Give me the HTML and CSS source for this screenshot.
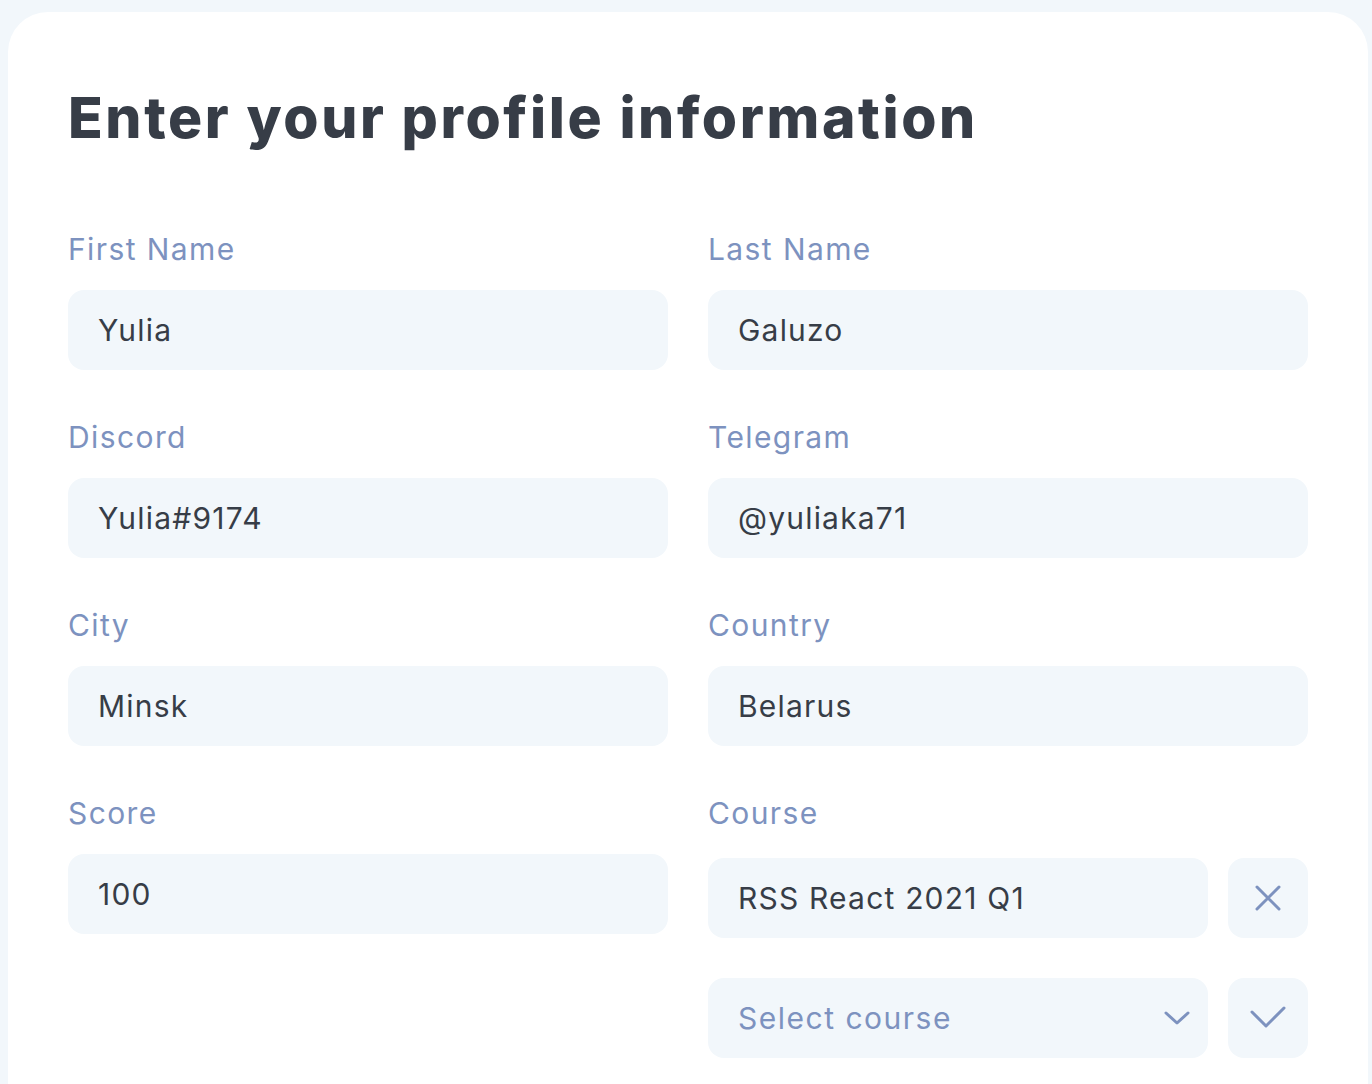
FILE: index.html
```html
<!DOCTYPE html>
<html lang="en">
<head>
<meta charset="utf-8">
<title>Profile</title>
<link rel="stylesheet" href="styles.css">
</head>
<body>
<main class="card">
  <h1 class="title">Enter your profile information</h1>
  <form class="grid">
    <div class="field">
      <label class="label">First Name</label>
      <div class="input">Yulia</div>
    </div>
    <div class="field">
      <label class="label">Last Name</label>
      <div class="input">Galuzo</div>
    </div>
    <div class="field">
      <label class="label">Discord</label>
      <div class="input">Yulia#9174</div>
    </div>
    <div class="field">
      <label class="label">Telegram</label>
      <div class="input">@yuliaka71</div>
    </div>
    <div class="field">
      <label class="label">City</label>
      <div class="input">Minsk</div>
    </div>
    <div class="field">
      <label class="label">Country</label>
      <div class="input">Belarus</div>
    </div>
    <div class="field">
      <label class="label">Score</label>
      <div class="input">100</div>
    </div>
    <div class="field">
      <label class="label">Course</label>
      <div class="course">
        <div class="course-row">
          <div class="input grow">RSS React 2021 Q1</div>
          <button type="button" class="icon-btn" aria-label="Remove">
            <svg width="26" height="26" viewBox="0 0 26 26"><path d="M2 2 L24 24 M24 2 L2 24" fill="none" stroke="#7d92bf" stroke-width="3" stroke-linecap="round"/></svg>
          </button>
        </div>
        <div class="course-row">
          <div class="input grow select">
            <span class="placeholder">Select course</span>
            <svg class="chev" width="26" height="14" viewBox="0 0 26 14"><path d="M2 2 L13 12 L24 2" fill="none" stroke="#7d92bf" stroke-width="3" stroke-linecap="round" stroke-linejoin="round"/></svg>
          </div>
          <button type="button" class="icon-btn" aria-label="Add">
            <svg width="36" height="24" viewBox="0 0 36 24"><path d="M2 6 L16 20 L34 2" fill="none" stroke="#7d92bf" stroke-width="3" stroke-linecap="round" stroke-linejoin="round"/></svg>
          </button>
        </div>
      </div>
    </div>
  </form>
</main>
</body>
</html>
```

FILE: styles.css
```css
html, body {
  margin: 0;
  padding: 0;
}
body {
  background: #f2f7fb;
  font-family: "Inter", "Noto Sans", sans-serif;
  padding: 12px 4px 0 8px;
  min-height: 1084px;
  box-sizing: border-box;
}
.card {
  background: #ffffff;
  border-radius: 40px 40px 0 0;
  padding: 72px 60px 40px 60px;
  min-height: 1072px;
  box-sizing: border-box;
}
.title {
  margin: 0 0 76px 0;
  font-size: 57px;
  line-height: 68px;
  font-weight: 800;
  color: #373d47;
  letter-spacing: 2.6px;
}
.grid {
  display: grid;
  grid-template-columns: 600px 600px;
  column-gap: 40px;
  row-gap: 46px;
  align-items: start;
}
.field {
  display: flex;
  flex-direction: column;
  gap: 20px;
}
.label {
  font-size: 30px;
  line-height: 42px;
  color: #7d92bf;
  letter-spacing: 1.4px;
}
.input {
  height: 80px;
  box-sizing: border-box;
  background: #f2f7fb;
  border-radius: 16px;
  padding: 0 30px;
  display: flex;
  align-items: center;
  font-size: 30px;
  color: #373d47;
  letter-spacing: 1.2px;
}
.course {
  display: flex;
  flex-direction: column;
  gap: 40px;
  margin-top: 4px;
}
.course-row {
  display: flex;
  gap: 20px;
}
.grow {
  flex: 1;
}
.select {
  justify-content: space-between;
  padding-right: 18px;
}
.placeholder {
  color: #7d92bf;
  letter-spacing: 1.5px;
}
.icon-btn {
  width: 80px;
  height: 80px;
  border: none;
  border-radius: 16px;
  background: #f2f7fb;
  display: flex;
  align-items: center;
  justify-content: center;
  padding: 0;
}
```
